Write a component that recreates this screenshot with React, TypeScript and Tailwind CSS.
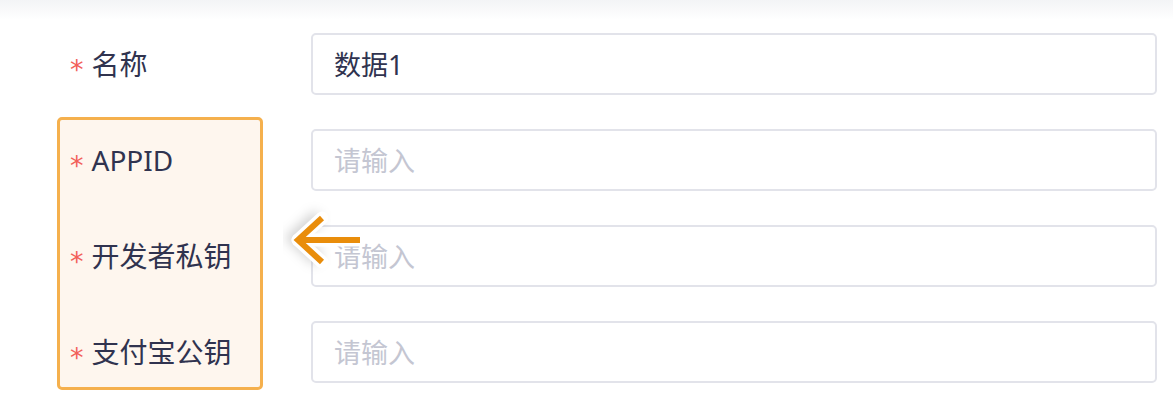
import React from 'react';

const labelFont = { fontFamily: '"Noto Sans", "Noto Sans CJK SC", sans-serif' };

const Label = ({ text }: { text: string }) => (
  <div className="flex h-[62px] items-center">
    <span
      className="mr-[8px] translate-y-[5px] text-[27px] leading-none text-[#f2605a]"
      style={{ fontFamily: '"DejaVu Sans", sans-serif' }}
    >
      *
    </span>
    <span className="text-[28px] leading-none text-[#30334f]">{text}</span>
  </div>
);

const Field = ({ value }: { value?: string }) => (
  <div className="flex h-[62px] items-center rounded-[5px] border-2 border-[#e2e3ea] bg-white px-[21px]">
    {value ? (
      <span className="text-[27px] leading-none text-[#30334f]">{value}</span>
    ) : (
      <span className="text-[27px] leading-none text-[#c4c6d2]">请输入</span>
    )}
  </div>
);

const Arrow = () => (
  <svg className="absolute left-[276px] top-[196px]" width="110" height="90" viewBox="0 0 110 90">
    <defs>
      <filter id="sh" x="-50%" y="-50%" width="200%" height="200%">
        <feGaussianBlur stdDeviation="6" />
      </filter>
    </defs>
    <path d="M46 22 L22 44 L46 66" fill="none" stroke="#000" strokeOpacity="0.18" strokeWidth="14" filter="url(#sh)" transform="translate(-3 -2)" />
    <path d="M46 22 L22 44 L46 66" fill="none" stroke="#fff" strokeWidth="13" strokeLinecap="round" strokeLinejoin="round" />
    <path d="M22 44 H84" fill="none" stroke="#fff" strokeWidth="13" strokeLinecap="round" />
    <path d="M46 22 L22 44 L46 66" fill="none" stroke="#e98d0b" strokeWidth="6" strokeLinejoin="miter" />
    <path d="M22 44 H84" fill="none" stroke="#e98d0b" strokeWidth="6" />
  </svg>
);

const App = () => {
  return (
    <div className="relative min-h-[404px] w-full bg-white" style={labelFont}>
      <div className="h-5 bg-gradient-to-b from-[#f3f4f6] to-white" />
      <div className="flex gap-[48px] pl-[57px] pr-4 pt-[13px]">
        <div className="w-[206px] shrink-0">
          <div className="pl-[13px]">
            <Label text="名称" />
          </div>
          <div className="mt-[22px] flex flex-col gap-[34px] rounded-[5px] border-[3px] border-[#f5b04d] bg-[#fef6ee] pb-[4px] pl-[10px] pt-[9px]">
            <Label text="APPID" />
            <Label text="开发者私钥" />
            <Label text="支付宝公钥" />
          </div>
        </div>
        <div className="flex flex-1 flex-col gap-[34px]">
          <Field value="数据1" />
          <Field />
          <Field />
          <Field />
        </div>
      </div>
      <Arrow />
    </div>
  );
};

export default App;
